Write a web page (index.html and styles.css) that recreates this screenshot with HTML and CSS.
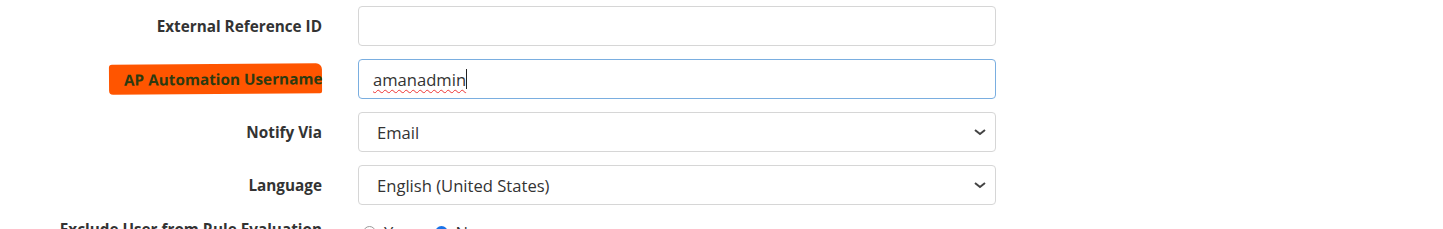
FILE: index.html
```html
<!DOCTYPE html>
<html lang="en">
<head>
    <meta charset="UTF-8">
    <meta name="viewport" content="width=device-width, initial-scale=1.0">
    <title>User details</title>
    <link rel="stylesheet" href="styles.css">
</head>
<body>
<form class="user-form">
    <div class="form-row">
        <label for="extRef">External Reference ID</label>
        <input type="text" id="extRef" class="field">
    </div>

    <div class="form-row">
        <label for="apUser"><span class="marker">AP Automation Username</span></label>
        <div class="field field-focus" id="apUser"><span class="typo">amanadmin</span><span class="caret"></span></div>
    </div>

    <div class="form-row">
        <label for="notify">Notify Via</label>
        <select id="notify" class="field">
            <option>Email</option>
        </select>
    </div>

    <div class="form-row">
        <label for="lang">Language</label>
        <select id="lang" class="field">
            <option>English (United States)</option>
        </select>
    </div>

    <div class="form-row radio-row">
        <label>Exclude User from Rule Evaluation</label>
        <div class="radios">
            <span class="radio"></span><span class="radio-text">Yes</span>
            <span class="radio checked"></span><span class="radio-text">No</span>
        </div>
    </div>
</form>
</body>
</html>
```

FILE: styles.css
```css
body {
    margin: 0;
    font-family: "Open Sans", Arial, sans-serif;
    background-color: white;
    color: #333;
}
.user-form {
    padding-top: 6px;
    display: flex;
    flex-direction: column;
    gap: 13px;
}
.form-row {
    display: grid;
    grid-template-columns: 322px 638px;
    column-gap: 36px;
    align-items: center;
}
.form-row label {
    text-align: right;
    font-weight: bold;
    font-size: 15.3px;
    color: #333;
}
.field {
    box-sizing: border-box;
    height: 40px;
    width: 100%;
    padding: 0 14px;
    border: 1px solid #d6d6d6;
    border-radius: 4px;
    background-color: white;
    font-family: "Open Sans", Arial, sans-serif;
    font-size: 16.6px;
    color: #333;
}
select.field {
    appearance: none;
    padding-left: 18px;
    background-image: url("data:image/svg+xml,%3Csvg xmlns='http://www.w3.org/2000/svg' width='14' height='10' viewBox='0 0 14 10'%3E%3Cpath d='M2 3l5 4 5-4' fill='none' stroke='%23444' stroke-width='2'/%3E%3C/svg%3E");
    background-repeat: no-repeat;
    background-position: right 8px center;
}
.field-focus {
    display: flex;
    align-items: center;
    border-color: #7aaee0;
}
.typo {
    text-decoration: underline wavy #e33;
    text-decoration-thickness: 1px;
    text-underline-offset: 3px;
}
.caret {
    display: inline-block;
    width: 1px;
    height: 20px;
    background-color: #222;
}
.marker {
    display: inline-block;
    background-color: #ff5500;
    color: #2b3a10;
    padding: 5px 0 5px 15px;
    border-radius: 3px 6px 2px 4px;
    transform: rotate(-0.4deg);
}
.radio-row {
    align-items: start;
    margin-top: 1px;
}
.radios {
    display: flex;
    align-items: center;
    font-size: 16.6px;
    padding-top: 2px;
}
.radio {
    box-sizing: border-box;
    width: 13px;
    height: 13px;
    border-radius: 50%;
    border: 1px solid #999;
    margin: 0 8px 0 5px;
}
.radio.checked {
    border: 4px solid #1a73e8;
    margin-left: 24px;
}
```
